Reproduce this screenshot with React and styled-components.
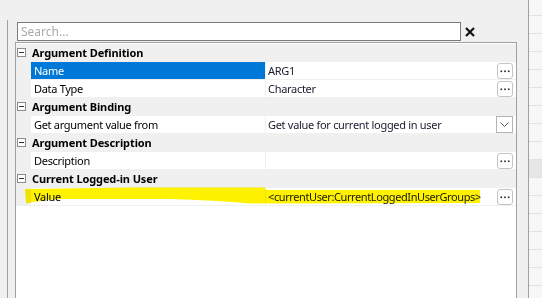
import React from 'react';
import styled, { createGlobalStyle } from 'styled-components';

const GlobalStyle = createGlobalStyle`
  html, body {
    margin: 0;
    padding: 0;
    background: #f0f0f0;
  }
  * { box-sizing: border-box; }
`;

const Page = styled.div`
  position: relative;
  width: 542px;
  height: 298px;
  display: flex;
  overflow: hidden;
  font-family: "Noto Sans", "Open Sans", sans-serif;
  font-size: 11px;
  letter-spacing: -0.3px;
  color: #000;
  background: #f0f0f0;
`;

const LeftPane = styled.div`
  width: 8px;
  margin-top: 20px;
  border-right: 1px solid #a0a0a0;
`;

const Main = styled.div`
  width: 509px;
  padding-left: 7px;
  display: flex;
  flex-direction: column;
`;

const SearchRow = styled.div`
  display: flex;
  align-items: center;
  margin-top: 22px;
  padding-left: 2px;
  height: 19px;
`;

const SearchBox = styled.input`
  width: 444px;
  height: 19px;
  border: 1px solid #7a7a7a;
  background: #fff;
  padding: 0 3px;
  font: inherit;
  font-size: 12px;
  letter-spacing: 0;
  outline: none;
  &::placeholder { color: #a9a9a9; }
`;

const ClearIcon = styled.svg`
  margin-left: 4px;
  width: 10px;
  height: 10px;
`;

const Grid = styled.div`
  flex: 1;
  margin-top: 1px;
  border: 1px solid #a0a0a0;
  border-bottom: none;
  background: #fff;
  padding-top: 1px;
`;

const Row = styled.div`
  display: grid;
  grid-template-columns: 15px 235px 1fr;
  height: 18px;
  border-bottom: 1px solid #f0f0f0;
  background: ${p => (p.$category ? '#f0f0f0' : '#fff')};
`;

const Gutter = styled.div`
  background: #f0f0f0;
  display: flex;
  align-items: center;
  padding-left: 1px;
`;

const Toggle = styled.div`
  position: relative;
  width: 9px;
  height: 9px;
  border: 1px solid #8c8c8c;
  background: #fff;
  &::after {
    content: '';
    position: absolute;
    left: 1px;
    right: 1px;
    top: 3px;
    height: 1px;
    background: #333;
  }
`;

const CategoryLabel = styled.div`
  grid-column: 2 / 4;
  font-weight: bold;
  letter-spacing: -0.1px;
  font-size: 11px;
  line-height: 17px;
  padding-left: 1px;
`;

const NameCell = styled.div`
  line-height: 17px;
  padding-left: 3px;
  background: ${p => (p.$selected ? '#0078d7' : 'transparent')};
  color: ${p => (p.$selected ? '#fff' : '#000')};
  border-right: 1px solid #f0f0f0;
`;

const ValueCell = styled.div`
  display: flex;
  align-items: center;
  padding-left: 2px;
  padding-right: 3px;
`;

const ValueText = styled.span`
  flex: 1;
  line-height: 17px;
  white-space: nowrap;
  color: #1a1a2e;
  letter-spacing: ${p => (p.$tight ? '-0.4px' : 'inherit')};
`;

const EllipsisButton = styled.div`
  width: 16px;
  height: 16px;
  border: 1px solid #c4c4c4;
  border-radius: 3px;
  background: #fff;
  display: flex;
  align-items: center;
  justify-content: center;
`;

const DropButton = styled.div`
  width: 17px;
  height: 17px;
  border: 1px solid #b4b4b4;
  background: #fff;
  display: flex;
  align-items: center;
  justify-content: center;
`;

const Gap = styled.div`
  width: 11px;
`;

const RightPane = styled.div`
  flex: 1;
  border-left: 1px solid #a0a0a0;
  background: repeating-linear-gradient(
    to bottom,
    #f7f7f7 0px,
    #f7f7f7 15px,
    #e2e2e2 15px,
    #e2e2e2 16px,
    #f7f7f7 16px,
    #f7f7f7 18px
  );
  display: flex;
  flex-direction: column;
`;

const RightBand = styled.div`
  margin-top: 160px;
  height: 17px;
  background: #e6e6e6;
`;

const Marker = styled.svg`
  position: absolute;
  left: 0;
  top: 0;
  width: 542px;
  height: 298px;
  pointer-events: none;
  mix-blend-mode: multiply;
`;

const sections = [
  {
    title: 'Argument Definition',
    rows: [
      { name: 'Name', value: 'ARG1', selected: true, button: 'ellipsis' },
      { name: 'Data Type', value: 'Character', button: 'ellipsis' },
    ],
  },
  {
    title: 'Argument Binding',
    rows: [
      { name: 'Get argument value from', value: 'Get value for current logged in user', button: 'drop' },
    ],
  },
  {
    title: 'Argument Description',
    rows: [{ name: 'Description', value: '', button: 'ellipsis' }],
  },
  {
    title: 'Current Logged-in User',
    rows: [{ name: 'Value', value: '<currentUser:CurrentLoggedInUserGroups>', button: 'ellipsis', tight: true }],
  },
];

const Chevron = () => (
  <svg width="9" height="5" viewBox="0 0 9 5">
    <path d="M0.5 0.5 L4.5 4.5 L8.5 0.5" fill="none" stroke="#555" strokeWidth="1" />
  </svg>
);

const Dots = () => (
  <svg width="10" height="4" viewBox="0 0 10 4">
    <rect x="0.5" y="1.5" width="1.6" height="1.6" fill="#222" />
    <rect x="4.2" y="1.5" width="1.6" height="1.6" fill="#222" />
    <rect x="7.9" y="1.5" width="1.6" height="1.6" fill="#222" />
  </svg>
);

export default function App() {
  return (
    <Page>
      <GlobalStyle />
      <LeftPane />
      <Main>
        <SearchRow>
          <SearchBox placeholder="Search..." />
          <ClearIcon viewBox="0 0 10 10">
            <path d="M1 1 L9 9 M9 1 L1 9" stroke="#111" strokeWidth="2.2" />
          </ClearIcon>
        </SearchRow>
        <Grid>
          {sections.map(sec => (
            <React.Fragment key={sec.title}>
              <Row $category>
                <Gutter>
                  <Toggle />
                </Gutter>
                <CategoryLabel>{sec.title}</CategoryLabel>
              </Row>
              {sec.rows.map(r => (
                <Row key={r.name}>
                  <Gutter />
                  <NameCell $selected={r.selected}>{r.name}</NameCell>
                  <ValueCell>
                    <ValueText $tight={r.tight}>{r.value}</ValueText>
                    {r.button === 'drop' ? (
                      <DropButton>
                        <Chevron />
                      </DropButton>
                    ) : (
                      <EllipsisButton>
                        <Dots />
                      </EllipsisButton>
                    )}
                  </ValueCell>
                </Row>
              ))}
            </React.Fragment>
          ))}
        </Grid>
      </Main>
      <Gap />
      <RightPane>
        <RightBand />
      </RightPane>
      <Marker viewBox="0 0 542 298">
        <path
          d="M25 189 L130 187.5 L265 187.5 L266 190 L480 190 L480 203 L250 203.5 Q215 200 170 199 L60 199 Q40 200 26 203.5 Z"
          fill="#fff200"
        />
      </Marker>
    </Page>
  );
}
